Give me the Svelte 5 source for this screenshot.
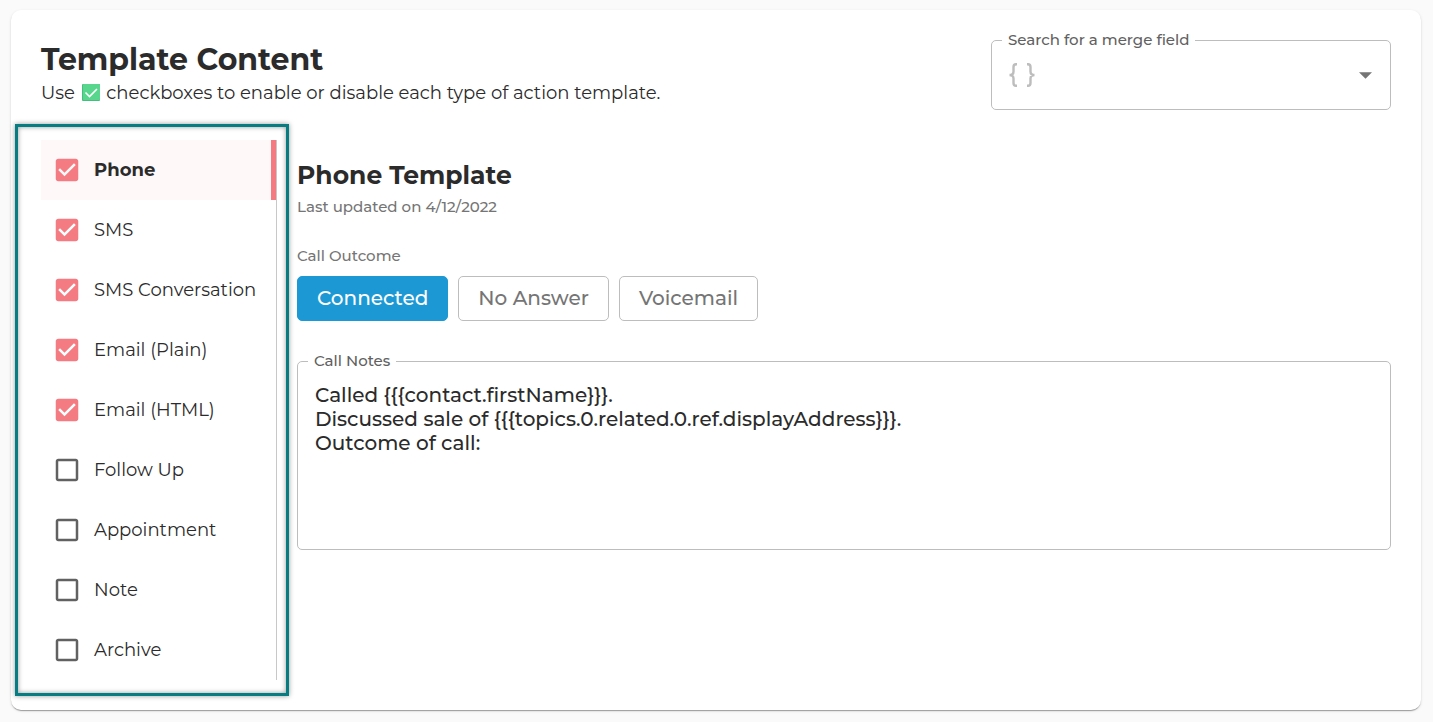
<script lang="ts">
  type Template = { id: string; label: string; enabled: boolean };

  let templates = $state<Template[]>([
    { id: 'phone', label: 'Phone', enabled: true },
    { id: 'sms', label: 'SMS', enabled: true },
    { id: 'sms-conversation', label: 'SMS Conversation', enabled: true },
    { id: 'email-plain', label: 'Email (Plain)', enabled: true },
    { id: 'email-html', label: 'Email (HTML)', enabled: true },
    { id: 'follow-up', label: 'Follow Up', enabled: false },
    { id: 'appointment', label: 'Appointment', enabled: false },
    { id: 'note', label: 'Note', enabled: false },
    { id: 'archive', label: 'Archive', enabled: false },
  ]);

  const outcomes = ['Connected', 'No Answer', 'Voicemail'];

  let active = $state('phone');
  let outcome = $state('Connected');
  let mergeField = $state('');
  let notes = $state(
    [
      'Called {{{contact.firstName}}}.',
      'Discussed sale of {{{topics.0.related.0.ref.displayAddress}}}.',
      'Outcome of call:',
    ].join('\n')
  );
</script>

<div class="page">
  <section class="card">
    <header>
      <div class="intro">
        <h1>Template Content</h1>
        <p>
          Use
          <svg class="tick" viewBox="0 0 18 17" aria-hidden="true">
            <rect width="18" height="17" rx="1" fill="#45bd7c" />
            <rect x="1" width="17" height="16" rx="1" fill="#58d68d" />
            <path d="M3.500 8.500l4 4L15 5" fill="none" stroke="#fff" stroke-width="1.600" />
          </svg>
          checkboxes to enable or disable each type of action template.
        </p>
      </div>

      <fieldset class="field search">
        <legend><label for="merge-field">Search for a merge field</label></legend>
        <div class="select">
          <svg class="braces" viewBox="0 0 26 24" aria-hidden="true">
            <path
              d="M8 1.200H7Q4.500 1.200 4.500 4V8.500Q4.500 12 0.500 12Q4.500 12 4.500 15.500V20Q4.500 22.800 7 22.800H8M18 1.200H19Q21.500 1.200 21.500 4V8.500Q21.500 12 25.500 12Q21.500 12 21.500 15.500V20Q21.500 22.800 19 22.800H18"
              fill="none"
              stroke="#bdbdbd"
              stroke-width="2.400"
            />
          </svg>
          <select id="merge-field" bind:value={mergeField}>
            <option value=""></option>
          </select>
          <svg class="caret" viewBox="0 0 12 6" aria-hidden="true">
            <path d="M0 0h12L6 6z" fill="#757575" />
          </svg>
        </div>
      </fieldset>
    </header>

    <div class="body">
      <nav>
        <ul>
          {#each templates as template (template.id)}
            <li class:active={template.id === active}>
              <label>
                <span class="check">
                  <input
                    type="checkbox"
                    bind:checked={template.enabled}
                    onchange={() => (active = template.id)}
                  />
                  <svg viewBox="0 0 24 24" aria-hidden="true">
                    {#if template.enabled}
                      <path
                        d="M19 3H5c-1.110 0-2 .9-2 2v14c0 1.100.89 2 2 2h14c1.110 0 2-.9 2-2V5c0-1.100-.89-2-2-2zm-9 14l-5-5 1.410-1.410L10 14.170l7.590-7.590L19 8l-9 9z"
                      />
                    {:else}
                      <path
                        d="M19 5v14H5V5h14m0-2H5c-1.100 0-2 .9-2 2v14c0 1.100.9 2 2 2h14c1.100 0 2-.9 2-2V5c0-1.100-.9-2-2-2z"
                      />
                    {/if}
                  </svg>
                </span>
                {template.label}
              </label>
            </li>
          {/each}
        </ul>
      </nav>

      <main>
        <h2>Phone Template</h2>
        <p class="muted">Last updated on 4/12/2022</p>

        <p class="muted group-label" id="outcome-label">Call Outcome</p>
        <div class="outcomes" role="group" aria-labelledby="outcome-label">
          {#each outcomes as name}
            <button
              type="button"
              class:selected={name === outcome}
              aria-pressed={name === outcome}
              onclick={() => (outcome = name)}
            >
              {name}
            </button>
          {/each}
        </div>

        <fieldset class="field notes">
          <legend><label for="call-notes">Call Notes</label></legend>
          <textarea id="call-notes" rows="6" bind:value={notes}></textarea>
        </fieldset>
      </main>
    </div>
  </section>
</div>

<style>
  :global(body) {
    background: #fafafa;
  }

  .page {
    padding: 10px 12px 12px 11px;
    font-family: Montserrat, Inter, sans-serif;
    font-weight: 500;
    color: #2b2b2b;
  }
  .page * {
    box-sizing: border-box;
  }
  h1,
  h2,
  p,
  ul {
    margin: 0;
    padding: 0;
  }

  .card {
    padding: 30px;
    background: #fff;
    border-radius: 10px;
    box-shadow:
      0 2px 1px -1px rgba(0, 0, 0, 0.2),
      0 1px 1px 0 rgba(0, 0, 0, 0.14),
      0 1px 3px 0 rgba(0, 0, 0, 0.12);
  }

  header {
    display: flex;
    justify-content: space-between;
    align-items: flex-start;
    gap: 20px;
  }
  h1 {
    font-size: 30px;
    line-height: 40px;
    font-weight: 700;
  }
  .intro p {
    font-size: 18px;
    line-height: 26px;
    font-weight: 400;
  }
  .tick {
    width: 18px;
    height: 17px;
    margin: 0 2px;
    vertical-align: -2px;
  }

  /* Outlined field: the legend sits in the border line */
  .field {
    min-width: 0;
    margin: 0;
    padding: 0 10px;
    border: 1px solid #bdbdbd;
    border-radius: 5px;
  }
  legend {
    padding: 0 6px;
    font-size: 15px;
    line-height: 20px;
    color: #616161;
  }
  .search {
    flex: 0 1 400px;
    margin-top: -10px;
  }
  .select {
    display: flex;
    align-items: center;
    height: 59px;
    padding: 0 8px 9px 7px;
  }
  .braces {
    width: 26px;
    height: 24px;
  }
  .caret {
    width: 13px;
    height: 7px;
    pointer-events: none;
  }
  select {
    flex: 1;
    align-self: stretch;
    appearance: none;
    border: 0;
    background: none;
    font: inherit;
    outline: none;
  }

  .body {
    display: flex;
    gap: 20px;
    margin-top: 30px;
  }

  nav {
    position: relative;
    flex: 0 0 236px;
    border-right: 1px solid #c8c8c8;
  }
  /* Highlight frame around the template list */
  nav::after {
    content: '';
    position: absolute;
    inset: -16px -13px -16px -26px;
    border: 3px solid #067d82;
    box-shadow:
      0 0 5px rgba(0, 0, 0, 0.4),
      inset 0 0 5px rgba(0, 0, 0, 0.4);
    pointer-events: none;
  }
  ul {
    list-style: none;
  }
  li {
    border-right: 5px solid transparent;
  }
  li.active {
    background: #fff8f8;
    border-color: #f47b82;
  }
  li label {
    display: flex;
    align-items: center;
    gap: 12px;
    height: 60px;
    padding-left: 11px;
    font-size: 18px;
    font-weight: 400;
    white-space: nowrap;
    cursor: pointer;
  }
  li.active label {
    font-weight: 700;
  }
  .check {
    display: grid;
    width: 30px;
    height: 30px;
  }
  .check > * {
    grid-area: 1 / 1;
  }
  .check input {
    appearance: none;
    width: 30px;
    height: 30px;
    margin: 0;
    cursor: pointer;
  }
  .check svg {
    fill: #616161;
    pointer-events: none;
  }
  .check input:checked + svg {
    fill: #f47b82;
  }

  main {
    flex: 1;
    min-width: 0;
    padding-top: 20px;
  }
  h2 {
    font-size: 25px;
    line-height: 30px;
    font-weight: 700;
  }
  .muted {
    margin-top: 7px;
    font-size: 15px;
    line-height: 20px;
    color: #757575;
  }
  .group-label {
    margin-top: 29px;
  }
  .outcomes {
    display: flex;
    gap: 10px;
    margin-top: 10px;
  }
  button {
    height: 45px;
    padding: 0 19px 2px;
    border: 1px solid #bdbdbd;
    border-radius: 5px;
    background: #fff;
    color: #757575;
    font: inherit;
    font-size: 20px;
    cursor: pointer;
  }
  button.selected {
    border-color: #1c99d5;
    background: #1c99d5;
    color: #fff;
  }

  .notes {
    margin-top: 30px;
  }
  textarea {
    display: block;
    width: 100%;
    padding: 12px 7px 22px;
    border: 0;
    background: none;
    color: inherit;
    font: inherit;
    font-size: 20px;
    line-height: 24px;
    resize: none;
    outline: none;
  }
</style>
